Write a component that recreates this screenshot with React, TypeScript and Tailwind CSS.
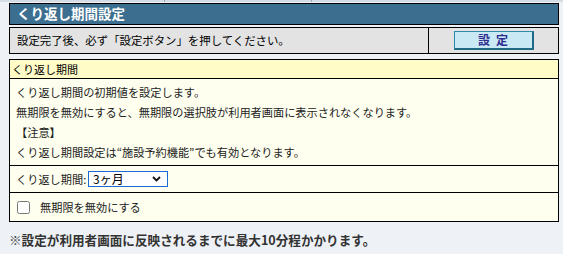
import React, { useState } from 'react';

const FONT = { fontFamily: '"Noto Sans CJK JP", "Noto Sans", sans-serif' };

const PERIODS = ['1ヶ月', '2ヶ月', '3ヶ月', '6ヶ月', '1年', '無期限'];

const App: React.FC = () => {
  const [period, setPeriod] = useState('3ヶ月');
  const [noUnlimited, setNoUnlimited] = useState(false);

  return (
    <div className="w-[563px] h-[254px] bg-[#eef1f6] overflow-hidden" style={FONT}>
      {/* cut-off tab strip at top */}
      <div className="flex h-[2px]">
        <div className="w-[165px] bg-[#d6dce4] border-r border-[#9aa6b4]" />
        <div className="w-[147px] bg-[#d6dce4] border-r border-[#9aa6b4]" />
        <div className="flex-1 bg-[#d6dce4]" />
      </div>

      <div className="ml-[9px] w-[550px] mt-[1px]">
        {/* title bar */}
        <div className="h-[22px] bg-[#3c6f8f] border border-black flex items-center pl-[7px]">
          <span className="text-white font-bold text-[13.5px] leading-none">くり返し期間設定</span>
        </div>

        {/* notice + button */}
        <div className="mt-[2px] h-[27px] bg-[#e3e3e3] border border-black flex">
          <div className="flex-1 flex items-center pl-[7px] text-[11.4px] text-black border-r border-black">
            設定完了後、必ず「設定ボタン」を押してください。
          </div>
          <div className="w-[129px] flex items-center justify-center">
            <button className="w-[80px] h-[19px] bg-[#c9e9f4] border border-[#2f8aa8] border-r-[2px] border-b-[2px] border-r-[#1f6a84] border-b-[#1f6a84] text-[#2e2e8e] font-bold text-[12px] leading-none tracking-[0.5em] pl-[0.5em]">
              設定
            </button>
          </div>
        </div>

        {/* period section */}
        <div className="mt-[5px] border border-black bg-[#fffff0]">
          <div className="h-[19px] bg-[#fffcc8] border-b border-black flex items-center pl-[2px] text-[11px] text-black">
            くり返し期間
          </div>
          <div className="px-[6px] py-[3px] text-[11.2px] text-[#222] border-b border-black">
            <p className="h-[20px] leading-[20px]">くり返し期間の初期値を設定します。</p>
            <p className="h-[20px] leading-[20px]">無期限を無効にすると、無期限の選択肢が利用者画面に表示されなくなります。</p>
            <p className="h-[20px] leading-[20px]">【注意】</p>
            <p className="h-[20px] leading-[20px]">くり返し期間設定は“施設予約機能”でも有効となります。</p>
          </div>
          <div className="h-[27px] flex items-center pl-[6px] text-[11.2px] text-[#222] border-b border-black">
            <span className="w-[72px]">くり返し期間:</span>
            <div className="relative">
              <select
                value={period}
                onChange={(e) => setPeriod(e.target.value)}
                className="appearance-none w-[80px] h-[16px] border border-[#1a6ad8] bg-white text-[12px] text-black pl-[4px] leading-none outline-none"
                style={FONT}
              >
                {PERIODS.map((p) => (
                  <option key={p} value={p}>{p}</option>
                ))}
              </select>
              <svg className="absolute right-[7px] top-[5px] pointer-events-none" width="9" height="6" viewBox="0 0 9 6">
                <path d="M1 1 L4.5 4.5 L8 1" fill="none" stroke="#111" strokeWidth="1.8" />
              </svg>
            </div>
          </div>
          <label className="h-[28px] flex items-center pl-[7px] text-[11.2px] text-[#222]">
            <input
              type="checkbox"
              checked={noUnlimited}
              onChange={(e) => setNoUnlimited(e.target.checked)}
              className="w-[13px] h-[13px] m-0"
            />
            <span className="ml-[10px]">無期限を無効にする</span>
          </label>
        </div>

        {/* footer */}
        <p className="mt-[12px] text-[12.6px] font-bold text-[#333] leading-none">
          ※設定が利用者画面に反映されるまでに最大10分程かかります。
        </p>
      </div>
    </div>
  );
};

export default App;
